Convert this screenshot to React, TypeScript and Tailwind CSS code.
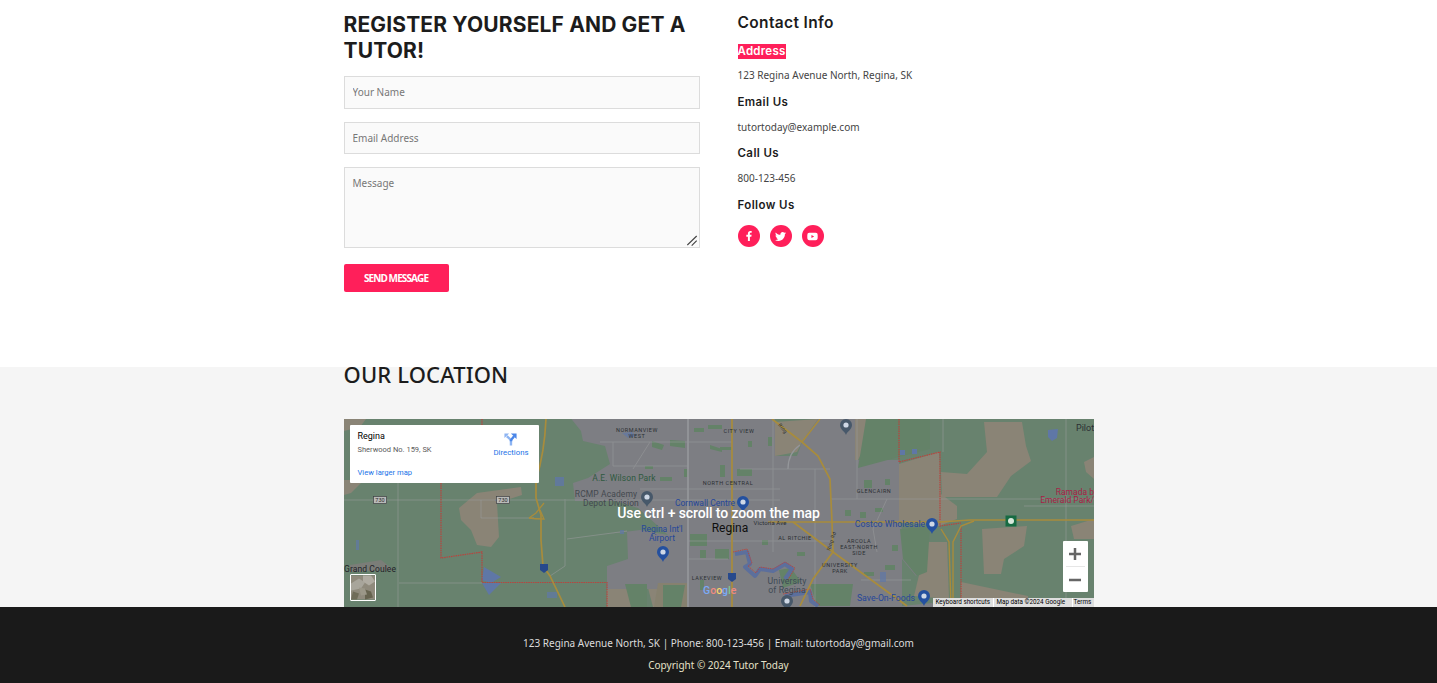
import { FaFacebookF, FaTwitter, FaYoutube } from 'react-icons/fa';

const headingFont = "font-['Inter','Liberation_Sans',sans-serif]";

function MapLabel({ x, y, children, fill = '#2b2f33', size = 5.5, anchor = 'middle', spacing = 0.55, weight = 400 }: {
  x: number; y: number; children: string; fill?: string; size?: number; anchor?: 'middle' | 'start' | 'end'; spacing?: number; weight?: number;
}) {
  return (
    <text x={x} y={y} fill={fill} fontSize={size} textAnchor={anchor} letterSpacing={spacing} fontWeight={weight} fontFamily="Roboto, sans-serif">
      {children}
    </text>
  );
}

function Pin({ x, y, fill, inner = '#cfd8e6' }: { x: number; y: number; fill: string; inner?: string }) {
  return (
    <g>
      <path d={`M${x} ${y + 10}c-1-3.500-6-5.500-6-10a6 6 0 0 1 12 0c0 4.500-5 6.500-6 10z`} fill={fill} />
      <circle cx={x} cy={y} r={2.6} fill={inner} />
    </g>
  );
}

function MapDrawing() {
  return (
    <svg viewBox="344 419 750 188" className="w-[750px] h-[188px] block">
      <rect x="344" y="419" width="750" height="188" fill="#68826e" />

      {/* rural tan patches */}
      <g fill="#8a8476">
        <path d="M344 419h22l-6 8-16 4z" />
        <path d="M344 480h20l-13 13-7 2z" />
        <path d="M459 508l18-15 44-6 1 8-25 8 2 34-8 10-14-2-6-15-10-10z" />
        <path d="M984 422h38l4 24 5 15-20 15-14 21h-55l-1-25 26 2 20-22z" />
        <path d="M982 529l45-3-3 20-20 13-3 15h-17z" />
        <path d="M1084 462l10-5v22l-8-7z" />
        <path d="M1071 526l23-7v20h-20z" />
        <path d="M899 464l40-12 2 42 16 12v13l-18 7-45-5v-40z" />
        <path d="M927 542h20l2 57-35-3z" />
        <path d="M961 582l67 14v11h-67z" />
        <path d="M607 584h18l22 0v23h-40z" />
        <path d="M647 584h40v23h-34z" />
        <path d="M775 422l43-3-16 23-5 10-22 4z" />
        <path d="M855 419h25l-22 41h-3z" />
      </g>
      <path d="M350 565l31-5 13 10-44 2z" fill="#7b7d78" />

      {/* city */}
      <path d="M567 419H775v37h22l5-14 16-23h37v41h44v61l3 8 27-3-3 46-10 4-14-17v47l30-3 3 4v-1l-2 1H688l-1-23h-80v-18l21-7-1-28-27 4 40-5 28 5-30-27-23-7-40 0-2-18 15-5 22-14-5-18-22-5-2-10-16-20z" fill="#7d7e83" />
      <path d="M607 583h81v6H607z" fill="#7d7e83" />
      <path d="M658 583h30v24h-34z" fill="#86816f" />

      {/* parks */}
      <g fill="#648268">
        <path d="M810 584h43l-3 22h-33zM737 469h15v7h-15zM768 437h4v9h-4zM748 441h4v6h-4zM779 570l12-2 10 14-18 6z" />
        <path d="M652 441l12 4-2 5-10-3zM670 440l15 1v7l-15-2zM720 465h5v12h-5zM684 469h5v8h-5zM660 477h12v4h-12zM645 466h8v3h-8zM710 445l12 4v3l-12-3zM694 428h10v4h-10zM708 425h14v4h-14zM720 447h12v3h-12z" />
        <path d="M690 534h17v12h-17zM700 550h6v8h-6zM715 549h14v10h-14zM700 580h4v10h-4zM663 585h22l-4 22h-18zM625 584h22v23h-16z" />
        <path d="M762 540h6v5h-6zM797 552h8v4h-8zM864 480h8v8h-8zM885 479h5v6h-5zM845 510h6v6h-6zM860 512h6v6h-6zM875 508h8v4h-8zM885 565h10v5h-10zM864 572h10v4h-10zM892 545h6v6h-6z" />
        <path d="M900 529l30-3-3 46-10 4-14-17z" />
        <path d="M866 419h64v30l-35 9-37 10z" />
      </g>

      {/* minor roads */}
      <g stroke="#9a9c9d" strokeWidth="1" fill="none" opacity="0.55">
        <path d="M344 500H780M398 480v127M399 583h83M481 500v18h53M565 499v67l-15 10M567 539l60-8" />
        <path d="M773 419V552M815 469V607M857 419v80M600 442H732M613 442v24h75M650 442l-17 27M640 489H780M740 469h90M830 499h264M887 499l-14 30 4 23M688 541h145M943 419v33M1066 419v188M688 559h40M1024 506h70M861 580h50" />
      </g>
      <path d="M688 419v188" stroke="#94969a" strokeWidth="1.800" fill="none" />
      <path d="M800 445c-6 4-12 12-12 24" stroke="#94969a" strokeWidth="1.300" fill="none" />

      {/* water */}
      <g fill="#5f77a6">
        <path d="M484 567l17 10-10 6-9-3z" />
        <path d="M482 583h19l-12 12z" />
        <path d="M555 477h9v9h-9z" opacity="0.8" />
        <path d="M1048 430l10-1-1 9-5 3-4-4z" />
        <path d="M622 433l10-1 4 4-8 2z" opacity="0.7" />
        <path d="M900 450h5v5h-5zM912 449h5v5h-5z" />
        <path d="M620 530h4v4h-4zM547 592h10v6h-10zM495 500l8-2 2 3-7 2zM356 540h3v10h-3zM880 572h6v10h-6z" opacity="0.7" />
      </g>
      <g stroke="#5c6f9c" strokeWidth="4" fill="none" strokeLinejoin="round">
        <path d="M735 554l12-2 3 12-5 3 10 9 5-7 13 2 12-7 7 5-7 10" />
        <path d="M785 596l25-4 1 9 7 5" />
      </g>

      {/* municipal boundary */}
      <g stroke="#b8443e" strokeWidth="1.200" strokeDasharray="1.500 0.800" fill="none">
        <path d="M482 419v6M441 483v75l41-6v30.500H607V607" />
        <path d="M899 419v43l41-10v74l21-3M961 526v73" />
        <path d="M733 552l14-3 5 14-4 3 8 7 4-6 13 2 12-7 10 6-7 12" strokeWidth="0.900" />
        <path d="M783 594l27-5 3 10 7 6" strokeWidth="0.900" />
      </g>

      {/* highways */}
      <g stroke="#a88c3c" strokeWidth="1.700" fill="none">
        <path d="M546 419c-1 22-4 42-10 61v18l5 17v25l2 26 7 10 15 31" />
        <path d="M529 518l7-5 8-10M529 518c6 1 10 1 15 1l-4-9" strokeWidth="1.300" />
        <path d="M732 419v188" />
        <path d="M772 419l30 23 16 14 12 23 2 43 1 30-20 27-13 27" />
        <path d="M820 419l-18 23" strokeWidth="1.400" />
        <path d="M793 522l40 30 74 54" />
        <path d="M768 522h172l30-2h124" />
        <path d="M941 529l8 13 2 64" strokeWidth="1.400" />
        <path d="M953 600v-58l8-16 13-5" strokeWidth="1.400" />
      </g>

      {/* highway shields */}
      <g fontFamily="Roboto, sans-serif" fontSize="5.500" textAnchor="middle">
        <rect x="373.500" y="496.500" width="13" height="7" fill="#b9bab8" stroke="#3f4144" strokeWidth="0.700" />
        <text x="380" y="502" fill="#2b2b2b">730</text>
        <rect x="496.500" y="496.500" width="13" height="7" fill="#b9bab8" stroke="#3f4144" strokeWidth="0.700" />
        <text x="503" y="502" fill="#2b2b2b">730</text>
      </g>
      <path d="M540 564h8v6l-4 3-4-3z" fill="#27498c" />
      <path d="M728 573h8v6l-4 3-4-3z" fill="#27498c" />
      <rect x="1005.500" y="515.500" width="11" height="11" fill="#176b42" />
      <circle cx="1011" cy="521" r="3" fill="#d8e8dc" />
      <text x="830" y="551" transform="rotate(-72 830 551)" fontSize="5" fill="#2b2f33" fontFamily="Roboto, sans-serif" letterSpacing="0.400">Ring Rd</text>
      <text x="778" y="425" transform="rotate(52 778 425)" fontSize="5" fill="#2b2f33" fontFamily="Roboto, sans-serif" letterSpacing="0.400">Ring</text>

      {/* pins */}
      <Pin x={846} y={425} fill="#47586a" />
      <Pin x={647} y={497} fill="#47586a" />
      <Pin x={663} y={552} fill="#24509f" />
      <Pin x={743} y={502} fill="#24509f" />
      <Pin x={932} y={524} fill="#24509f" />
      <Pin x={924} y={596} fill="#24509f" />
      <Pin x={787} y={601} fill="#47586a" />

      {/* place labels */}
      <MapLabel x={637} y={432}>NORMANVIEW</MapLabel>
      <MapLabel x={637} y={438}>WEST</MapLabel>
      <MapLabel x={739} y={433}>CITY VIEW</MapLabel>
      <MapLabel x={624} y={481} size={8.500} fill="#2f5a40" spacing={0.1}>A.E. Wilson Park</MapLabel>
      <MapLabel x={606} y={497} size={8.500} fill="#44494f" spacing={0.1}>RCMP Academy</MapLabel>
      <MapLabel x={611} y={506} size={8.500} fill="#44494f" spacing={0.1}>Depot Division</MapLabel>
      <MapLabel x={662} y={532} size={8.500} fill="#26479a" spacing={0}>Regina Int&apos;l</MapLabel>
      <MapLabel x={662} y={541} size={8.500} fill="#26479a" spacing={0}>Airport</MapLabel>
      <MapLabel x={728} y={485}>NORTH CENTRAL</MapLabel>
      <MapLabel x={705} y={506} size={8.500} fill="#26479a" spacing={0}>Cornwall Centre</MapLabel>
      <MapLabel x={874} y={493}>GLENCAIRN</MapLabel>
      <MapLabel x={890} y={527} size={8.700} fill="#26479a" spacing={0.05}>Costco Wholesale</MapLabel>
      <MapLabel x={730} y={532} size={12} fill="#0f0f0f" spacing={0}>Regina</MapLabel>
      <MapLabel x={770} y={525} size={6} spacing={0.1}>Victoria Ave</MapLabel>
      <MapLabel x={795} y={540}>AL RITCHIE</MapLabel>
      <MapLabel x={859} y={543}>ARCOLA</MapLabel>
      <MapLabel x={859} y={549}>EAST-NORTH</MapLabel>
      <MapLabel x={859} y={555}>SIDE</MapLabel>
      <MapLabel x={840} y={567}>UNIVERSITY</MapLabel>
      <MapLabel x={840} y={573}>PARK</MapLabel>
      <MapLabel x={787} y={584} size={8.700} fill="#3d4a55" spacing={0.1}>University</MapLabel>
      <MapLabel x={787} y={593} size={8.700} fill="#3d4a55" spacing={0.1}>of Regina</MapLabel>
      <MapLabel x={707} y={580}>LAKEVIEW</MapLabel>
      <MapLabel x={886} y={601} size={8.700} fill="#26479a" spacing={0}>Save-On-Foods</MapLabel>
      <MapLabel x={344} y={572} size={8.500} anchor="start" spacing={0.1} fill="#1f2328">Grand Coulee</MapLabel>
      <MapLabel x={1076} y={431} size={9} anchor="start" spacing={0}>Pilot</MapLabel>
      <MapLabel x={1094} y={495} size={8.500} anchor="end" fill="#a81d46" spacing={0}>Ramada b</MapLabel>
      <MapLabel x={1094} y={503} size={8.500} anchor="end" fill="#a81d46" spacing={0}>Emerald Park/</MapLabel>

      {/* google wordmark */}
      <text x="703" y="594" fontSize="10.500" fontWeight="500" fontFamily="Roboto, sans-serif">
        <tspan fill="#7baaf7">G</tspan>
        <tspan fill="#f08a80">o</tspan>
        <tspan fill="#f5d26b">o</tspan>
        <tspan fill="#7baaf7">g</tspan>
        <tspan fill="#7fc98f">l</tspan>
        <tspan fill="#f08a80">e</tspan>
      </text>
    </svg>
  );
}

function Thumbnail() {
  return (
    <svg viewBox="0 0 24 24" className="w-full h-full block">
      <rect width="24" height="24" fill="#8f8a7c" />
      <path d="M0 8l8-5 6 4-4 6-10 2z" fill="#a8a59b" />
      <path d="M12 0h8l4 6-6 4-6-4z" fill="#b0aca2" />
      <path d="M2 16l6 2-2 6H0z" fill="#6f6c59" />
      <path d="M14 14l6 2 2 6-8 2z" fill="#66634f" />
      <path d="M8 12l6 1 2 6-6 1z" fill="#9b9788" />
    </svg>
  );
}

function MapEmbed() {
  return (
    <div className="relative w-[750px] h-[188px] overflow-hidden font-['Roboto',sans-serif]">
      <MapDrawing />

      <div className="absolute left-[6px] top-[6px] w-[189px] h-[58px] bg-white rounded-[1px] pl-2 pr-[8px] pt-[6px]">
        <div className="flex justify-between">
          <div>
            <p className="text-[9px] leading-[11px] text-black">Regina</p>
            <p className="text-[7.500px] leading-[11px] text-[#5b5b5b] mt-[2px]">Sherwood No. 159, SK</p>
          </div>
          <div className="flex flex-col items-center mt-[2px] mr-[2px]">
            <svg viewBox="0 0 14 14" className="w-[13px] h-[13px]">
              <path d="M7.500 13.500V9C7.500 7 6 6 3 3.500" stroke="#8db4f2" strokeWidth="2.600" fill="none" />
              <path d="M0.500 0.500h5L0.500 5.500z" fill="#8db4f2" />
              <path d="M7.500 9C7.500 6.500 9 5.500 11 3.500" stroke="#4a86e8" strokeWidth="2.600" fill="none" />
              <path d="M13.500 0.500h-6l6 6z" fill="#4a86e8" />
            </svg>
            <span className="text-[7.800px] leading-[10px] text-[#1a73e8] mt-[2px]">Directions</span>
          </div>
        </div>
        <p className="text-[7.600px] leading-[11px] text-[#1a73e8] mt-[9px]">View larger map</p>
      </div>

      <div className="absolute left-0 right-0 top-[84px] text-center text-[14px] leading-[20px] font-medium tracking-[-0.1px] text-white">
        Use ctrl + scroll to zoom the map
      </div>

      <div className="absolute left-[6px] bottom-[6px] w-[26px] h-[27px] border border-white rounded-[1px] overflow-hidden">
        <Thumbnail />
      </div>

      <div className="absolute left-[719px] top-[122px] w-[25px] h-[51px] bg-white rounded-[1px] flex flex-col items-center">
        <div className="h-[25px] flex items-center justify-center text-[#666]">
          <svg viewBox="0 0 12 12" className="w-[12px] h-[12px]"><path d="M4.750 0h2.500v4.750H12v2.500H7.250V12h-2.500V7.250H0v-2.500h4.750z" fill="currentColor" /></svg>
        </div>
        <div className="w-[19px] h-[1px] bg-[#e6e6e6]" />
        <div className="h-[25px] flex items-center justify-center text-[#666]">
          <svg viewBox="0 0 12 12" className="w-[12px] h-[12px]"><path d="M0 4.750h12v2.500H0z" fill="currentColor" /></svg>
        </div>
      </div>

      <div className="absolute right-0 bottom-0 h-[9px] flex text-[6.300px] leading-[9px] text-black bg-[#dedede] whitespace-nowrap">
        <span className="pl-[3px] w-[60px]">Keyboard shortcuts</span>
        <span className="pl-[3px] w-[79px] border-l border-white">Map data ©2024 Google</span>
        <span className="pl-[1px] w-[22px] border-l border-white">Terms</span>
      </div>
    </div>
  );
}

export default function App() {
  return (
    <div className="font-['Noto_Sans',sans-serif] min-h-[683px] bg-white">
      {/* Contact */}
      <section className="h-[367px] bg-white pt-[12px]">
        <div className="w-[750px] mx-auto flex gap-[38px]">
          <div className="w-[356px]">
            <h2 className={`${headingFont} text-[21px] leading-[26px] font-bold text-[#1c1c1c] tracking-[0.15px] uppercase`}>
              Register yourself and get a tutor!
            </h2>
            <form className="mt-[12px]">
              <input
                placeholder="Your Name"
                className="block w-full h-[33px] px-2 pb-[2px] bg-[#fafafa] border border-[#dcdcdc] text-[10px] placeholder-[#777] outline-none"
              />
              <input
                placeholder="Email Address"
                className="block w-full h-[32px] mt-[13px] px-2 bg-[#fafafa] border border-[#dcdcdc] text-[10px] placeholder-[#777] outline-none"
              />
              <div className="relative mt-[13px]">
                <textarea
                  placeholder="Message"
                  className="block w-full h-[81px] px-2 py-[8px] resize-none bg-[#fafafa] border border-[#dcdcdc] text-[10px] leading-[15px] placeholder-[#777] outline-none"
                />
                <svg viewBox="0 0 11 12" className="absolute right-[2px] bottom-[1px] w-[11px] h-[12px] pointer-events-none">
                  <path d="M0.300 10L9.700 1M4.700 10.700l5-5" stroke="#444" strokeWidth="1.200" fill="none" />
                </svg>
              </div>
              <button
                type="button"
                className="block w-[105px] h-[28px] mt-[16px] bg-[#ff1f5a] rounded-[2px] text-white text-[10px] font-bold font-['Open_Sans',sans-serif] tracking-[-0.9px] uppercase"
              >
                Send message
              </button>
            </form>
          </div>

          <div className="w-[356px] text-[10px] text-[#444]">
            <h3 className={`${headingFont} text-[15.500px] leading-[22px] font-semibold text-[#1c1c1c] tracking-[0.35px]`}>Contact Info</h3>
            <h4 className={`${headingFont} mt-[10px] text-[11.500px] leading-[15px] font-semibold tracking-[0.25px]`}>
              <span className="inline-block bg-[#ff1f5a] text-white">Address</span>
            </h4>
            <p className="mt-[9px] leading-[14px]">123 Regina Avenue North, Regina, SK</p>
            <h4 className={`${headingFont} mt-[13px] text-[11.500px] leading-[15px] font-semibold text-[#1c1c1c] tracking-[0.4px]`}>Email Us</h4>
            <p className="mt-[10px] leading-[14px]">tutortoday@example.com</p>
            <h4 className={`${headingFont} mt-[12px] text-[11.500px] leading-[15px] font-semibold text-[#1c1c1c] tracking-[0.4px]`}>Call Us</h4>
            <p className="mt-[10px] leading-[14px]">800-123-456</p>
            <h4 className={`${headingFont} mt-[13px] text-[11.500px] leading-[15px] font-semibold text-[#1c1c1c] tracking-[0.4px]`}>Follow Us</h4>
            <div className="mt-[12px] flex gap-[10px]">
              <span className="w-[22px] h-[22px] rounded-full bg-[#ff1f5a] text-white flex items-center justify-center">
                <FaFacebookF className="w-[10px] h-[10px]" />
              </span>
              <span className="w-[22px] h-[22px] rounded-full bg-[#ff1f5a] text-white flex items-center justify-center">
                <FaTwitter className="w-[11px] h-[11px]" />
              </span>
              <span className="w-[22px] h-[22px] rounded-full bg-[#ff1f5a] text-white flex items-center justify-center">
                <FaYoutube className="w-[11px] h-[11px]" />
              </span>
            </div>
          </div>
        </div>
      </section>

      {/* Location */}
      <section className="h-[240px] bg-[#f5f5f5]">
        <div className="w-[750px] mx-auto">
          <h2 className="h-[52px] text-[22px] leading-[14px] font-medium text-[#1c1c1c] tracking-[0.15px] uppercase">Our location</h2>
          <MapEmbed />
        </div>
      </section>

      {/* Footer */}
      <footer className="h-[76px] bg-[#1a1a1a] pt-[29px] text-center text-[10px] leading-[14px] text-[#dcdcdc]">
        <p>123 Regina Avenue North, SK | Phone: 800-123-456 | Email: tutortoday@gmail.com</p>
        <p className="mt-[8px] text-[#e6e2c8]">Copyright © 2024 Tutor Today</p>
      </footer>
    </div>
  );
}
